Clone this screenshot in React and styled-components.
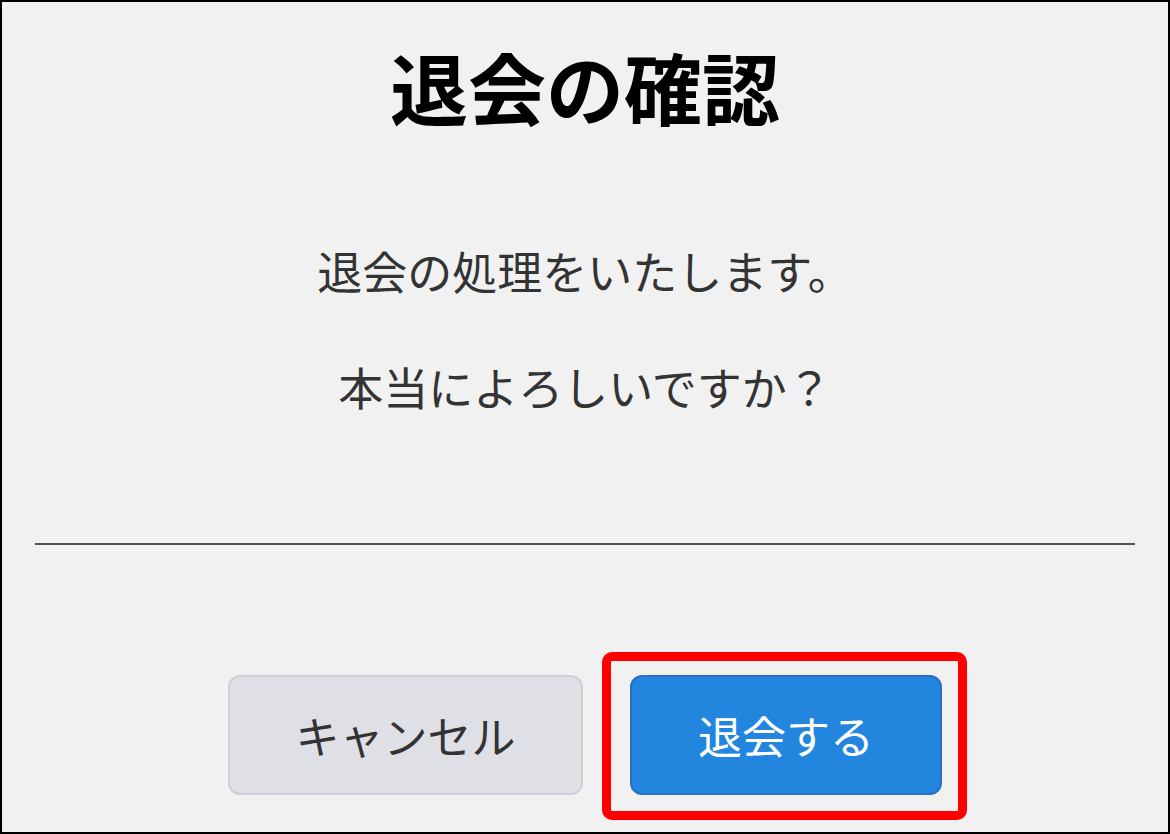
import React from "react";
import styled, { createGlobalStyle } from "styled-components";

const GlobalStyle = createGlobalStyle`
  html, body {
    margin: 0;
    padding: 0;
    background: #f1f1f1;
  }
  * {
    box-sizing: border-box;
  }
`;

const App = () => {
  return (
    <>
      <GlobalStyle />
      <Dialog>
        <Title>退会の確認</Title>
        <Message>
          <Line>退会の処理をいたします。</Line>
          <Line>本当によろしいですか？</Line>
        </Message>
        <Divider />
        <Actions>
          <Button variant="cancel">キャンセル</Button>
          <Highlight>
            <Button variant="danger">退会する</Button>
          </Highlight>
        </Actions>
      </Dialog>
    </>
  );
};

export default App;

const Dialog = styled.div`
  width: 1170px;
  height: 834px;
  border: 2px solid #000;
  background: #f1f1f1;
  display: flex;
  flex-direction: column;
  align-items: center;
  padding: 45px 33px 0 33px;
  font-family: "Noto Sans CJK JP", "Noto Sans", sans-serif;
  color: #333;
`;

const Title = styled.h1`
  margin: 0;
  font-size: 78px;
  line-height: 1;
  font-weight: 700;
  color: #000;
`;

const Message = styled.div`
  margin-top: 123px;
  display: flex;
  flex-direction: column;
  align-items: center;
  gap: 71px;
`;

const Line = styled.p`
  margin: 0;
  font-size: 45px;
  line-height: 1;
  color: #333;
`;

const Divider = styled.hr`
  align-self: stretch;
  margin: 134px 0 0;
  border: none;
  height: 2px;
  background: #55534b;
`;

const Actions = styled.div`
  margin-top: 130px;
  display: flex;
  justify-content: center;
  gap: 47px;
`;

const Button = styled.button`
  height: 120px;
  width: ${(props) => (props.variant === "cancel" ? "355px" : "312px")};
  border-radius: 12px;
  font-family: inherit;
  font-size: 44px;
  line-height: 1;
  cursor: pointer;
  background: ${(props) =>
    props.variant === "cancel" ? "#dfdfe6" : "#2286de"};
  border: 2px solid
    ${(props) => (props.variant === "cancel" ? "#cfcfd7" : "#2a6fc6")};
  color: ${(props) => (props.variant === "cancel" ? "#333" : "#fff")};
`;

const Highlight = styled.div`
  position: relative;
  display: flex;

  &::after {
    content: "";
    position: absolute;
    top: -23px;
    left: -28px;
    right: -25px;
    bottom: -25px;
    border: 9px solid #ff0000;
    border-radius: 10px;
    pointer-events: none;
  }
`;
